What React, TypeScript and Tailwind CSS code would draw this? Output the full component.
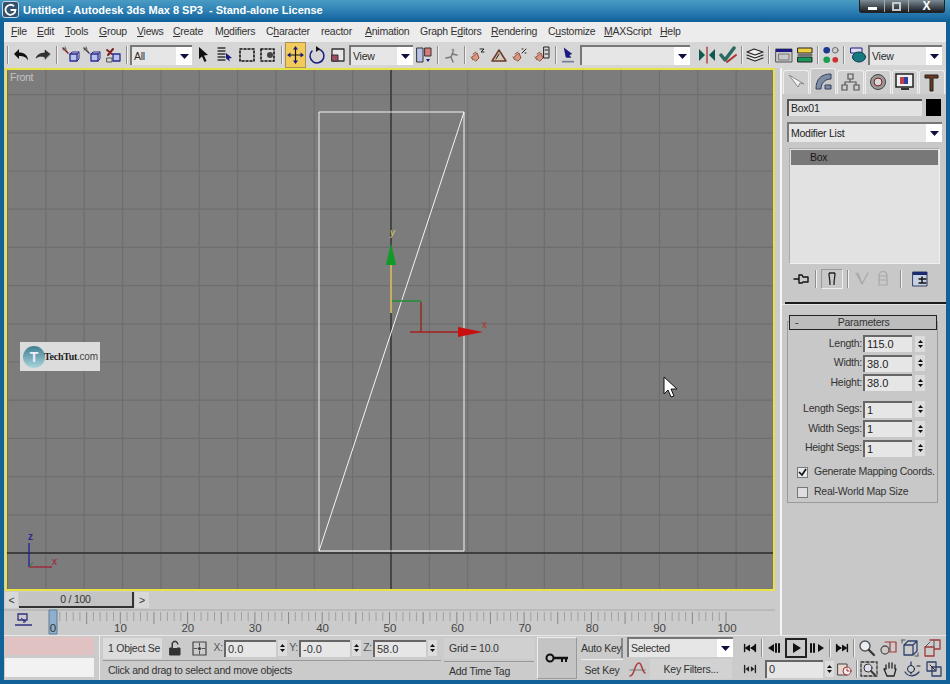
import React from "react";

const Sep = ({ className = "w-[6px]" }: { className?: string }) => (
  <div className={`flex h-full shrink-0 items-center justify-center ${className}`}>
    <div className="h-[18px] w-[2px] border-l border-[#8e8e8e] border-r-[#f2f2f2] border-r" />
  </div>
);

const Ic = ({ className = "w-[21px]", children }: { className?: string; children: React.ReactNode }) => (
  <div className={`flex h-full shrink-0 items-center justify-center ${className}`}>
    <svg width="20" height="20" viewBox="0 0 20 20" fill="none" strokeLinecap="round" strokeLinejoin="round">
      {children}
    </svg>
  </div>
);

const Tri = () => (
  <svg width="9" height="5" viewBox="0 0 9 5"><path d="M0 0h9L4.5 5z" fill="#101040" /></svg>
);

const Dd = ({ text, className, textClass = "" }: { text: string; className: string; textClass?: string }) => (
  <div className={`flex shrink-0 items-stretch border-t-2 border-l-2 border-t-[#777] border-l-[#777] bg-[#e6e6e6] text-[10.5px] ${className}`}>
    <div className={`flex-1 truncate pl-[2px] leading-[18px] ${textClass}`}>{text}</div>
    <div className="flex w-[16px] items-center justify-center bg-white"><Tri /></div>
  </div>
);

const Spin = ({ className = "" }: { className?: string }) => (
  <div className={`flex h-[16px] w-[9px] shrink-0 flex-col items-center justify-center gap-[2px] bg-[#dcdcdc] ${className}`}>
    <svg width="5" height="3" viewBox="0 0 5 3"><path d="M2.5 0L5 3H0z" fill="#111" /></svg>
    <svg width="5" height="3" viewBox="0 0 5 3"><path d="M0 0h5L2.5 3z" fill="#111" /></svg>
  </div>
);

const Field = ({ value, className }: { value: string; className: string }) => (
  <div className={`h-[17px] shrink-0 border-t-2 border-l-2 border-t-[#666] border-l-[#666] bg-[#e6e6e6] pl-[2px] text-[11px] leading-[14px] tracking-normal ${className}`}>
    {value}
  </div>
);

const Param = ({ label, value }: { label: string; value: string }) => (
  <div className="flex h-[19.5px] items-center">
    <div className="w-[75px] pr-[1px] text-right text-[10.5px] text-[#333]">{label}:</div>
    <Field value={value} className="w-[49px]" />
    <Spin className="ml-[3px] w-[10px]" />
  </div>
);

const menu: [string, string, string, string][] = [
  ["", "F", "ile", "w-[26px]"],
  ["", "E", "dit", "w-[28px]"],
  ["", "T", "ools", "w-[34px]"],
  ["", "G", "roup", "w-[38px]"],
  ["", "V", "iews", "w-[36px]"],
  ["", "C", "reate", "w-[42px]"],
  ["M", "o", "difiers", "w-[51px]"],
  ["C", "h", "aracter", "w-[55px]"],
  ["reactor", "", "", "w-[44px]"],
  ["", "A", "nimation", "w-[55px]"],
  ["Graph E", "d", "itors", "w-[71px]"],
  ["", "R", "endering", "w-[57px]"],
  ["C", "u", "stomize", "w-[56px]"],
  ["", "M", "AXScript", "w-[56px]"],
  ["", "H", "elp", "w-[30px]"],
];

const ticks = Array.from({ length: 101 }, (_, i) => i);
const vLines = Array.from({ length: 21 }, (_, i) => 391 + (i - 10) * 38.35);
const hLines = Array.from({ length: 14 }, (_, i) => 553 - i * 38.2);
const nums = [10, 20, 30, 40, 50, 60, 70, 80, 90, 100];

const Linked = ({ a = "#7a2020" }: { a?: string }) => (
  <>
    <path d="M2 3l5 5" stroke={a} strokeWidth="1.5" />
    <path d="M4 2l1 2M2 5l2-1" stroke="#555" />
    <path d="M9 9h7v7H9z" fill="#b9c4ea" stroke="#2a2a90" strokeWidth="1.3" />
    <path d="M9 9l2-2h7l-2 2M18 7v7l-2 2" stroke="#2a2a90" />
  </>
);

const Rope = ({ extra }: { extra: React.ReactNode }) => (
  <>
    <path d="M4 12l5-4 2 5-3 3z" fill="#d69a84" stroke="#964c3a" />
    <path d="M5 9l3-2M3 12l2 3" stroke="#964c3a" />
    {extra}
  </>
);

export default function App() {
  return (
    <div className="flex h-[684px] w-[950px] flex-col overflow-hidden bg-[#126298] font-['Liberation_Sans',Arial,sans-serif] text-[10.5px] tracking-[-0.25px] text-[#2a2a2a]">
      {/* title bar */}
      <div className="flex h-[22px] shrink-0 items-start bg-gradient-to-b from-[#4a9cc4] via-[#2d80b4] to-[#0e5f98]">
        <div className="mt-[1px] ml-[2px] flex h-[17px] w-[17px] items-center justify-center rounded-[3px] border border-[#c8d8e4] bg-[#33506c]">
          <svg width="13" height="13" viewBox="0 0 13 13" fill="none">
            <path d="M10 3.2A5 5 0 1 0 11.5 7H6.5" stroke="#fff" strokeWidth="1.8" />
          </svg>
        </div>
        <div className="mt-[2px] ml-[4px] w-[310px] whitespace-pre text-[11px] font-bold leading-[16px] tracking-normal text-white">
          Untitled - Autodesk 3ds Max 8 SP3  - Stand-alone License
        </div>
        <div className="ml-auto mr-[5px] flex h-[13px] w-[86px] rounded-b-[3px] border border-t-0 border-[#222] bg-gradient-to-b from-[#7d8c96] to-[#1b1f24]">
          <div className="flex w-[25px] items-end justify-center border-r border-[#aaa] pb-[2px]"><div className="h-[3px] w-[9px] bg-white" /></div>
          <div className="flex w-[24px] items-center justify-center border-r border-[#aaa]"><div className="h-[9px] w-[9px] border-[2px] border-[#c9c9c9]" /></div>
          <div className="flex-1 text-center text-[12px] font-bold leading-[12px] text-white">X</div>
        </div>
      </div>

      {/* inner window */}
      <div className="mx-[4px] flex flex-col bg-[#cbcbcb]">
        {/* menu */}
        <div className="flex h-[20px] shrink-0 items-center bg-[#ececec] pl-[7px] text-[#333]">
          {menu.map(([pre, u, post, w]) => (
            <div key={pre + u + post} className={`shrink-0 whitespace-pre ${w}`}>
              {pre}
              {u && <span className="underline">{u}</span>}
              {post}
            </div>
          ))}
        </div>

        {/* toolbar */}
        <div className="flex h-[26px] shrink-0 items-center bg-[#d6d6d6]">
          <Sep className="w-[6px] pl-[2px]" />
          <Ic className="w-[22px]"><path d="M3 9l5-5v3.5c5 0 9 2.5 9 8-2-3.5-4.5-4.5-9-4.5v3z" fill="#111" /></Ic>
          <Ic className="w-[22px]"><path d="M17 9l-5-4v3c-5 0-8 2-9 5 3-2 5-2 9-1v2z" fill="#333" stroke="#111" strokeWidth=".5" /></Ic>
          <Sep />
          <Ic><Linked /></Ic>
          <Ic className="w-[22px]"><Linked a="#444" /></Ic>
          <Ic>
            <path d="M3 5l5 4M4 10l5-6" stroke="#7a2020" strokeWidth="2" />
            <path d="M9 9h7v7H9z" fill="#b9c4ea" stroke="#2a2a90" strokeWidth="1.3" />
            <path d="M3 13h5v4H3z" stroke="#555" />
          </Ic>
          <Sep />
          <Dd text="All" className="h-[20px] w-[62px]" />
          <Ic className="w-[22px]"><path d="M6 2l9 8-4 .5 2.5 5.5-2 1-2.5-5.5L6 14z" fill="#111" /></Ic>
          <Ic>
            <path d="M3 3h7M3 6h7M3 9h7M3 12h7M3 15h7" stroke="#333" strokeWidth="1.3" />
            <path d="M11 8l6 5-3 .5 1 3-4-3z" fill="#1a1a80" />
          </Ic>
          <Ic className="w-[23px]"><path d="M3 4h14v12H3z" stroke="#111" strokeWidth="1.6" strokeDasharray="2 2" /></Ic>
          <Ic><path d="M2 4h13v12H2z" stroke="#111" strokeWidth="1.6" strokeDasharray="2 2" /><circle cx="11" cy="10" r="3" fill="#444" /></Ic>
          <Sep />
          <div className="h-full w-[21px] shrink-0 border border-[#a89050] bg-[#f2cb5c]">
            <svg width="19" height="24" viewBox="0 0 19 24" fill="none">
              <path d="M9.5 6v12M3.5 12h12" stroke="#111" strokeWidth="1.2" />
              <path d="M9.5 3l2.5 3.5H7zM9.5 21l2.5-3.5H7zM1 12l3.5-2.5v5zM18 12l-3.5-2.5v5z" fill="#1a1a80" />
            </svg>
          </div>
          <Ic><path d="M5 6a7 7 0 1 0 6-2" stroke="#1a1a80" strokeWidth="1.5" /><path d="M9 1l4 3-4 3z" fill="#111" /></Ic>
          <Ic className="w-[22px]"><path d="M4 4h12v12H4z" fill="#e8e8e8" stroke="#333" strokeWidth="1.3" /><path d="M4 10h6v6H4z" fill="#a05060" stroke="#333" /></Ic>
          <Dd text="View" className="h-[20px] w-[64px]" />
          <Ic className="w-[22px]">
            <path d="M3 3h6v14H3z" fill="#b9c4ea" stroke="#333" />
            <path d="M11 3h6v8h-6z" fill="#d87a7a" stroke="#333" />
            <path d="M12 14h4l-2 3z" fill="#1a1a80" />
          </Ic>
          <Sep />
          <Ic><circle cx="11" cy="5" r="1.5" fill="#999" /><path d="M11 7l-2 5-5 1M9 12l2 5M10 9l5 1" stroke="#777" strokeWidth="1.4" /></Ic>
          <Sep className="w-[5px]" />
          <Ic><Rope extra={<path d="M12 4h4l-3 3h3" stroke="#222" />} /></Ic>
          <Ic><path d="M3 16L10 5l7 11z" fill="#d8c8b8" stroke="#6a3a2a" strokeWidth="1.5" /><path d="M7 14l3-5" stroke="#222" /></Ic>
          <Ic className="w-[22px]"><Rope extra={<path d="M12 8l4-4M12 4h1M15 8h1" stroke="#222" />} /></Ic>
          <Ic className="w-[22px]"><Rope extra={<path d="M12 2h5v11h-5zM13 5h3M13 9h3" stroke="#222" />} /></Ic>
          <Sep />
          <Ic className="w-[19px]"><path d="M5 2l9 7-3 1 2 3H8l-1-1z" fill="#1a1a80" /><path d="M4 17h12" stroke="#77809a" strokeWidth="2" strokeDasharray="2 1" /></Ic>
          <Dd text="" className="ml-[2px] h-[20px] w-[110px]" />
          <div className="w-[6px] shrink-0" />
          <Ic className="w-[22px]"><path d="M10 2v16" stroke="#a02020" strokeWidth="1.2" /><path d="M2 4l6 6-6 6z" fill="#0f5a50" /><path d="M18 4l-6 6 6 6z" fill="#0f5a50" /></Ic>
          <Ic><path d="M2 10l4 5L15 3" stroke="#2a6a60" strokeWidth="3.5" /><path d="M8 17l9-7" stroke="#b03030" strokeWidth="2" /></Ic>
          <Sep />
          <Ic className="w-[20px]"><path d="M2 7l7-3 9 3-8 3zM2 10l8 3 8-3M2 13l8 3 8-3" stroke="#222" strokeWidth="1.2" fill="#eee" /></Ic>
          <Sep className="w-[8px]" />
          <Ic><path d="M2 4h16v13H2z" fill="#c8c8c8" stroke="#555" /><path d="M2 4h16v3H2z" fill="#1a1a80" /><path d="M5 9h10v6H5z" stroke="#777" /></Ic>
          <Ic><path d="M3 3h14v5H3z" fill="#f0d040" stroke="#222" /><path d="M3 12h14v5H3z" fill="#18985a" stroke="#222" /><path d="M3 10h14" stroke="#111" /></Ic>
          <Sep />
          <Ic className="w-[19px]">
            <circle cx="6" cy="5" r="3.5" fill="#1a3a90" />
            <circle cx="15" cy="5" r="3" fill="#ccc" stroke="#666" />
            <circle cx="6" cy="15" r="3.5" fill="#18a050" />
            <circle cx="15" cy="15" r="3" fill="#d03030" />
          </Ic>
          <Sep className="w-[7px]" />
          <Ic><path d="M3 3h11v5H3z" fill="#dde" stroke="#1a1a80" /><ellipse cx="11" cy="12" rx="6.5" ry="5" fill="#157a80" stroke="#0c3a50" /></Ic>
          <Dd text="View" className="h-[20px] w-[74px]" />
        </div>

        {/* main */}
        <div className="flex h-[567px] shrink-0">
          <div className="flex w-[776px] shrink-0 flex-col">
            {/* viewport */}
            <div className="relative ml-[1px] h-[523px] w-[770px] shrink-0 border-2 border-[#e8e244] bg-[#7c7c7c]">
              <svg className="block h-[519px] w-[766px]" viewBox="7 70 766 519" fill="none">
                {vLines.map((x) => <path key={x} d={`M${x} 70V589`} stroke="#6e6e6e" strokeWidth="1.2" />)}
                {hLines.map((y) => <path key={y} d={`M7 ${y}H773`} stroke="#6e6e6e" strokeWidth="1.2" />)}
                <path d="M391 70V589" stroke="#2e2e2e" strokeWidth="1.3" />
                <path d="M7 553H773" stroke="#2e2e2e" strokeWidth="1.3" />
                <path d="M319 112H464V551H319zM319 551L464 112" stroke="#f4f4f4" strokeWidth="1" />
                <path d="M391 313V262" stroke="#c4b060" strokeWidth="2" />
                <path d="M391 243l5 22h-10z" fill="#109a28" />
                <path d="M392 301H421V332" stroke="#2e8a40" strokeWidth="1" />
                <path d="M421 302V332M410 332H460" stroke="#a82020" strokeWidth="1.3" />
                <path d="M483 332l-25 5v-10z" fill="#c81010" />
                <path d="M392 301H421" stroke="#1c9030" />
                <text x="390" y="236" fontSize="10" fill="#d8c860" fontStyle="italic">y</text>
                <text x="482" y="328" fontSize="10" fill="#b03030">x</text>
                <path d="M29 543V567" stroke="#2020a0" strokeWidth="1.3" />
                <path d="M29 567H52" stroke="#a02030" strokeWidth="1.3" />
                <path d="M29 567l4-5" stroke="#208040" />
                <text x="28" y="540" fontSize="10" fontWeight="bold" fill="#2a2a90">z</text>
                <text x="52" y="565" fontSize="10" fill="#a02030">x</text>
                <path d="M664 377v17l4-4 3 7 3-1-3-7h6z" fill="#fff" stroke="#111" strokeWidth="1" />
              </svg>
              <div className="absolute top-0 left-[3px] text-[10.5px] text-[#c4c4c4]">Front</div>
              <div className="absolute top-[272px] left-[13px] flex h-[29px] w-[80px] items-center bg-[#dcdcdc]">
                <div className="ml-[3px] flex h-[22px] w-[22px] items-center justify-center rounded-full bg-gradient-to-b from-[#3f7f92] to-[#a9d6dc] text-[14px] font-bold leading-none text-[#eef]">T</div>
                <div className="ml-[-1px] whitespace-nowrap text-[10px] font-['Liberation_Serif',serif] text-[#222]"><span className="font-bold">TechTut</span><span className="text-[#444] font-['Liberation_Sans',sans-serif]">.com</span></div>
              </div>
            </div>
            {/* scrollbar */}
            <div className="ml-[1px] flex h-[17px] shrink-0 items-stretch pt-[1px]">
              <div className="flex w-[13px] items-center justify-center bg-[#d8d8d8] leading-none text-[#333]">&lt;</div>
              <div className="ml-[1px] w-[115px] border-b-2 border-r-2 border-b-[#333] border-r-[#333] bg-[#c4c4c4] text-center leading-[14px] text-[#333]">0 / 100</div>
              <div className="ml-[1px] flex w-[14px] items-center justify-center bg-[#d8d8d8] leading-none text-[#333]">&gt;</div>
            </div>
            {/* ruler */}
            <div className="flex h-[27px] shrink-0">
              <svg className="block h-[27px] w-[776px]" viewBox="4 608 776 27" fill="none">
                <path d="M4 610H775" stroke="#aaa" />
                <path d="M18 614h9v6h-9zM24 620v3M15 625h17" stroke="#303080" strokeWidth="1.3" />
                <path d="M21 618l5 4" stroke="#303080" />
                {ticks.map((i) => (
                  <path key={i} d={`M${53 + i * 6.73} 612v${i % 5 === 0 ? 12 : 9}`} stroke={i % 5 === 0 ? "#888" : "#a0a0a0"} />
                ))}
                <path d="M49 610h8v24h-8z" fill="#8eb0cc" stroke="#5f7f9c" />
                <text x="53" y="632" textAnchor="middle" fontSize="11.5" fill="#333" letterSpacing="0">0</text>
                {nums.map((n) => (
                  <text key={n} x={53 + n * 6.74} y="632" textAnchor="middle" fontSize="11.5" fill="#444" letterSpacing="0" fontFamily="Liberation Sans">{n}</text>
                ))}
              </svg>
            </div>
          </div>
          <div className="w-[2px] shrink-0 bg-[#f6f6f6]" />
          {/* command panel */}
          <div className="flex w-[164px] shrink-0 flex-col bg-[#c8c8c8] text-[#222]">
            <div className="flex h-[26px] shrink-0 items-end gap-[1px] bg-[#d6d6d6] pr-[1px] pl-[1px]">
              {[
                <path key="a" d="M3 3l9 12 2-4 4 1z" fill="#f4f4f4" stroke="#888" />,
                <path key="b" d="M3 18C3 8 8 3 18 3v5C12 8 8 12 8 18zM12 14h6v4h-6z" fill="#7e8ca4" stroke="#34405c" />,
                <path key="c" d="M8 2h5v5H8zM2 13h5v5H2zM14 13h5v5h-5zM10 7v3M5 13v-3h11v3" stroke="#555" strokeWidth="1.2" />,
                <g key="d"><circle cx="11" cy="10" r="7.5" fill="#999" stroke="#444" /><circle cx="11" cy="10" r="4" fill="#d8d8d8" stroke="#7a2020" /></g>,
                <g key="e"><path d="M2 2h17v13H2z" fill="#f0f0f0" stroke="#222" strokeWidth="1.5" /><path d="M6 5h4v7H6z" fill="#c04050" /><path d="M10 5h4v7h-4z" fill="#3040a0" /><path d="M7 17h8" stroke="#333" strokeWidth="2" /></g>,
                <path key="f" d="M4 3h13v3H12v13H9V6H4z" fill="#6b3a1c" stroke="#222" />,
              ].map((icon, i) => (
                <div key={i} className={`flex flex-1 items-center justify-center rounded-t-[3px] border border-b-0 border-[#eee] ${i === 1 ? "h-[26px] bg-[#c8c8c8]" : "h-[24px] bg-[#cfcfcf]"}`}>
                  <svg width="21" height="21" viewBox="0 0 21 21" fill="none">{icon}</svg>
                </div>
              ))}
            </div>
            <div className="mt-[5px] flex items-center pr-[5px] pl-[5px]">
              <div className="h-[17px] w-[135px] border-t-2 border-l-2 border-t-[#555] border-l-[#555] bg-[#e2e2e2] pl-[2px] leading-[14px]">Box01</div>
              <div className="ml-[4px] h-[17px] w-[15px] bg-black" />
            </div>
            <Dd text="Modifier List" className="mt-[6px] ml-[5px] h-[20px] w-[155px]" />
            <div className="mt-[6px] ml-[7px] h-[116px] w-[151px] border border-[#f0f0f0] border-t-[#aaa] border-l-[#aaa] bg-[#e2e2e2] p-[1px]">
              <div className="h-[15px] bg-[#787878] pl-[19px] leading-[15px] text-[#1a1a1a]">Box</div>
            </div>
            <div className="flex h-[30px] items-center pl-[9px]">
              <Ic className="w-[22px]"><path d="M2 10h5M7 6h3l1 2h5v5h-5l-1 1H7z" stroke="#111" strokeWidth="1.4" /></Ic>
              <Sep className="w-[6px]" />
              <div className="mx-[2px] flex h-[20px] w-[22px] items-center justify-center border border-[#eee] border-t-[#999] border-l-[#999]">
                <svg width="14" height="14" viewBox="0 0 14 14" fill="none"><path d="M4 1c0 4 1 6 1 12M10 1c0 4-1 6-1 12M4 1h6" stroke="#222" strokeWidth="1.3" /></svg>
              </div>
              <Sep className="w-[6px]" />
              <Ic><path d="M4 4l6 11 6-11M10 15l-4-11" stroke="#a8a8a8" strokeWidth="1.2" /></Ic>
              <Ic><path d="M6 7h8v9H6zM6 7c0-6 8-6 8 0M6 11h8" stroke="#a8a8a8" strokeWidth="1.2" /></Ic>
              <Sep className="w-[16px]" />
              <Ic className="w-[22px]"><path d="M3 3h14v14H3z" fill="#c8d0e4" stroke="#304060" /><path d="M3 3h14v3H3z" fill="#1a2a70" /><path d="M9 10h7M12 8v6M9 14h7" stroke="#111" strokeWidth="1.4" /></Ic>
            </div>
            <div className="mt-[8px] ml-[3px] h-[2px] shrink-0 bg-[#1a1a1a]" />
            <div className="h-[1px] shrink-0 bg-[#e4e4e4]" />
            <div className="relative mt-[16px] ml-[5px] h-[182px] w-[151px] border border-[#9a9a9a] pt-[12px]">
              <div className="absolute top-[-7px] left-[1px] flex h-[15px] w-[148px] items-center border border-[#222] bg-[#bdbdbd] leading-none text-[#333]">
                <span className="pl-[5px]">-</span>
                <span className="flex-1 pr-[7px] text-center">Parameters</span>
              </div>
              <div>
                <Param label="Length" value="115.0" />
                <Param label="Width" value="38.0" />
                <Param label="Height" value="38.0" />
              </div>
              <div className="pt-[7px]">
                <Param label="Length Segs" value="1" />
                <Param label="Width Segs" value="1" />
                <Param label="Height Segs" value="1" />
              </div>
              <div className="mt-[4px] flex h-[20px] items-center pl-[9px] text-[#333]">
                <div className="flex h-[11px] w-[11px] items-center justify-center border border-[#777] bg-[#e8e8e8]">
                  <svg width="9" height="9" viewBox="0 0 9 9" fill="none"><path d="M1 4l3 3 4-6" stroke="#111" strokeWidth="1.7" /></svg>
                </div>
                <span className="ml-[6px] whitespace-nowrap">Generate Mapping Coords.</span>
              </div>
              <div className="flex h-[20px] items-center pl-[9px] text-[#333]">
                <div className="h-[11px] w-[11px] border border-[#777] bg-[#dedede]" />
                <span className="ml-[6px] whitespace-nowrap">Real-World Map Size</span>
              </div>
            </div>
          </div>
        </div>

        {/* bottom */}
        <div className="flex h-[45px] shrink-0 border-t border-[#e8e8e8] bg-[#cbcbcb] text-[#333]">
          <div className="flex w-[96px] shrink-0 flex-col gap-[3px] border-r border-[#eee] pt-[1px] pl-[1px]">
            <div className="h-[18px] w-[89px] bg-[#e0c2c2]" />
            <div className="h-[19px] w-[89px] bg-[#f2f2f2]" />
          </div>
          <div className="ml-[3px] flex w-[338px] shrink-0 flex-col">
            <div className="flex h-[25px] items-center border-b border-[#999]">
              <div className="h-[21px] w-[59px] shrink-0 whitespace-nowrap bg-[#dcdcdc] pl-[5px] leading-[21px] text-[#333]">1 Object Se</div>
              <Ic className="w-[25px]"><path d="M5 10h10v7H5zM7 10V6c0-4 6-4 6 0" fill="#333" stroke="#333" strokeWidth="1" /><path d="M8 6c0-2.5 4-2.5 4 0v4H8z" fill="#cbcbcb" /></Ic>
              <Ic className="w-[25px]"><path d="M3 4h13v13H3z" stroke="#444" strokeWidth="1.2" /><circle cx="9.5" cy="10.5" r="1.5" fill="#333" /><path d="M9.5 5v3M9.5 13v3M4 10.5h3M12 10.5h3" stroke="#555" /></Ic>
              <div className="w-[11px] shrink-0 text-right text-[#555]">X:</div>
              <Field value="0.0" className="ml-[1px] w-[52px]" />
              <Spin className="ml-[2px]" />
              <div className="w-[11px] shrink-0 text-right text-[#555]">Y:</div>
              <Field value="-0.0" className="ml-[1px] w-[51px]" />
              <Spin className="ml-[2px]" />
              <div className="w-[11px] shrink-0 text-right text-[#555]">Z:</div>
              <Field value="58.0" className="ml-[1px] w-[53px]" />
              <Spin className="ml-[2px]" />
            </div>
            <div className="truncate pl-[5px] leading-[18px] text-[#333]">Click and drag to select and move objects</div>
          </div>
          <div className="ml-[3px] flex w-[90px] shrink-0 flex-col">
            <div className="mt-[2px] h-[21px] bg-[#d0d0d0] pl-[5px] leading-[21px]">Grid = 10.0</div>
            <div className="mt-[2px] h-[19px] border-t border-[#999] pl-[5px] leading-[18px]">Add Time Tag</div>
          </div>
          <div className="mt-[1px] ml-[3px] flex h-[42px] w-[40px] shrink-0 items-center justify-center border-t border-l border-[#eee] border-r border-b border-r-[#999] border-b-[#999] bg-[#c4c4c4]">
            <svg width="24" height="12" viewBox="0 0 24 12" fill="none">
              <circle cx="5" cy="6" r="3.5" stroke="#111" strokeWidth="2" />
              <path d="M8 6H23" stroke="#111" strokeWidth="2.5" />
              <path d="M17 6v4M21 6v4" stroke="#111" strokeWidth="2" />
            </svg>
          </div>
          <div className="ml-[4px] flex w-[42px] shrink-0 flex-col whitespace-nowrap pt-[2px] text-center text-[#333]">
            <div className="h-[20px] border-r-2 border-[#888] leading-[20px]">Auto Key</div>
            <div className="mt-[1px] h-[20px] border-t border-[#eee] leading-[20px]">Set Key</div>
          </div>
          <div className="ml-[4px] flex w-[107px] shrink-0 flex-col pt-[1px]">
            <Dd text="Selected" className="h-[20px] w-[106px]" />
            <div className="mt-[1px] flex h-[21px] items-center">
              <Ic className="w-[22px]"><path d="M2 17c5 0 4-13 9-13 3 0 3 9 6 10" stroke="#b04040" strokeWidth="1.6" /><path d="M2 11h15" stroke="#666" strokeWidth=".8" /></Ic>
              <div className="ml-[1px] h-[20px] w-[82px] bg-[#d2d2d2] text-center leading-[20px]">Key Filters...</div>
            </div>
          </div>
          <div className="ml-[7px] flex w-[205px] shrink-0 flex-col pt-[1px]">
            <div className="flex h-[21px] items-center">
              <Ic className="w-[18px]"><path d="M4 6v8M16 6v8" stroke="#111" strokeWidth="1.6" /><path d="M4 10l6-4v8zM10 10l6-4v8z" fill="#111" /></Ic>
              <Sep className="w-[6px]" />
              <Ic className="w-[20px]"><path d="M3 10l6-4v8z" fill="#111" /><path d="M11 6v8M14 6v8" stroke="#111" strokeWidth="2" /></Ic>
              <div className="flex h-[20px] w-[22px] shrink-0 items-center justify-center border-2 border-[#222]"><svg width="12" height="12" viewBox="0 0 12 12"><path d="M3 1l8 5-8 5z" fill="#111" /></svg></div>
              <Ic className="w-[20px]"><path d="M17 10l-6-4v8z" fill="#111" /><path d="M4 6v8M7 6v8" stroke="#111" strokeWidth="2" /></Ic>
              <Sep className="w-[6px]" />
              <Ic className="w-[18px]"><path d="M4 6v8M16 6v8" stroke="#111" strokeWidth="1.6" /><path d="M4 6l6 4-6 4zM10 6l6 4-6 4z" fill="#111" /></Ic>
              <Sep className="w-[5px]" />
              <Ic className="w-[21px]"><circle cx="8" cy="8" r="5" fill="#e8eef4" stroke="#555" strokeWidth="1.4" /><path d="M12 12l5 5" stroke="#333" strokeWidth="2.2" /></Ic>
              <Ic className="w-[22px]"><circle cx="7" cy="12" r="4" stroke="#555" strokeWidth="1.3" /><path d="M7 4h11v10H12M12 4v10" stroke="#a03a3a" strokeWidth="1.2" /></Ic>
              <Ic className="w-[22px]"><path d="M4 7l4-4h9v10l-4 4H4zM4 7h9v10M13 7l4-4" stroke="#30406a" strokeWidth="1.3" /><path d="M2 2h3M2 2v3M15 18h3M18 15v3" stroke="#555" /></Ic>
              <Ic className="w-[22px]"><path d="M3 9h9v9H3zM8 2h10v9h-6" stroke="#a03a3a" strokeWidth="1.3" /><path d="M3 9l5-5M12 9V2" stroke="#555" /></Ic>
            </div>
            <div className="flex h-[22px] items-center">
              <Ic className="w-[18px]"><path d="M4 6v8M16 6v8" stroke="#222" strokeWidth="1.5" /><path d="M5 10l4-3v6zM15 10l-4-3v6z" fill="#222" /></Ic>
              <Field value="0" className="ml-[6px] h-[18px] w-[58px]" />
              <Spin className="ml-[2px]" />
              <Ic className="w-[21px]"><path d="M3 5h9v11H3z" fill="#e8d8d0" stroke="#444" /><circle cx="12" cy="12" r="4" fill="#eee" stroke="#a03030" /><path d="M12 10v2h2" stroke="#a03030" /></Ic>
              <Sep className="w-[3px]" />
              <Ic className="w-[21px]"><path d="M2 3h16v14H2z" stroke="#333" strokeWidth="1.3" strokeDasharray="3 2" /><circle cx="9" cy="9" r="4" fill="#dde" stroke="#333" /><path d="M12 12l4 4" stroke="#333" strokeWidth="1.8" /></Ic>
              <Ic className="w-[22px]"><path d="M6 10V6M9 9V4M12 9V4M15 10V6M6 10l-2 0 3 7h7l2-7" stroke="#222" strokeWidth="1.3" /></Ic>
              <Ic className="w-[22px]"><path d="M3 13c4 6 11 4 14 0M9 3v12" stroke="#30406a" strokeWidth="1.3" /><circle cx="9" cy="10" r="3.5" fill="#c8d0e4" stroke="#222" /><path d="M15 7h3" stroke="#222" /></Ic>
              <Ic className="w-[22px]"><path d="M3 3h9v9H3zM8 8h9v9H8z" stroke="#30406a" strokeWidth="1.3" /><path d="M6 6l5 5" stroke="#222" /></Ic>
            </div>
          </div>
        </div>
      </div>
    </div>
  );
}
